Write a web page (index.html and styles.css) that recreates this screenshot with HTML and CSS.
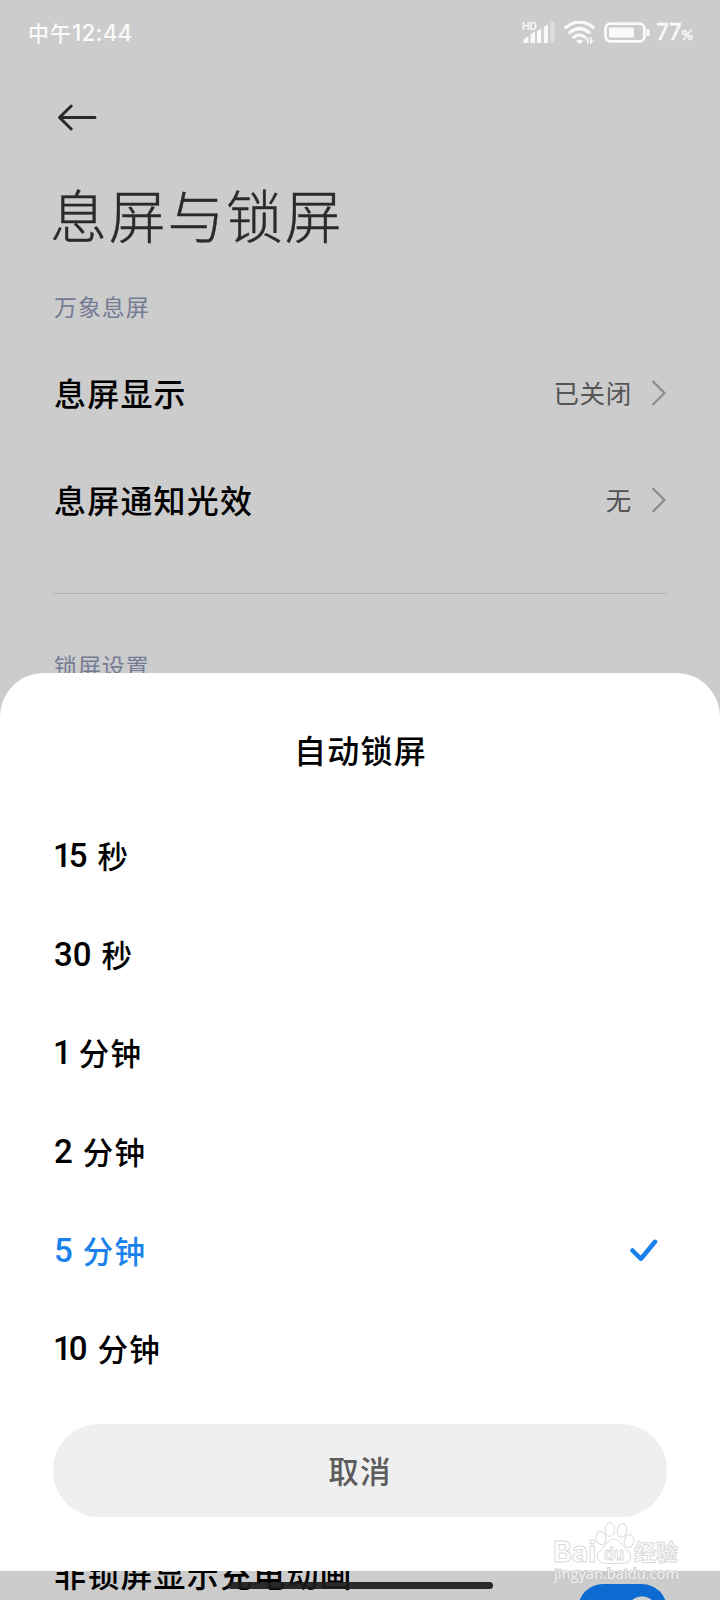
FILE: index.html
```html
<!DOCTYPE html>
<html lang="zh-CN">
<head>
  <meta charset="UTF-8" />
  <meta name="viewport" content="width=device-width, initial-scale=1.0" />
  <title>息屏与锁屏</title>
  <link rel="stylesheet" href="styles.css">
</head>
<body>
  <div class="screen">
    <header class="status-bar">
      <span class="clock">中午<b>12:44</b></span>
      <div class="status-icons">
        <svg class="signal" width="34" height="24" viewBox="0 0 34 24">
          <text class="hd" x="0" y="8.5" textLength="15" lengthAdjust="spacingAndGlyphs">HD</text>
          <path d="M1.5 22v-2.500q1-3 5-4V22zM8.500 22V14q1-2.500 4.500-3.500V22zM15 22V11q.6-2.500 4.200-3V22zM21.800 22V7.500q.4-3 4.200-4V22z" />
          <rect class="faint" x="28.500" y="1" width="4" height="21" rx="1" />
        </svg>
        <svg class="wifi" width="32" height="24" viewBox="0 0 32 24">
          <path class="arc" d="M1.800 6.500Q15.500-4.500 29.200 6.500M5.800 11.500Q15.500 3.500 25.200 11.500M9.800 16.300Q15.500 11.500 21 16.300" />
          <path d="M12 20q3.500-3 7 0l-3.500 3zM21 19.500l3.500-3.500V23h-1.500v-3.500zM26 16h1.500v3.500H30L26 23.500z" />
        </svg>
        <svg class="battery" width="46" height="22" viewBox="0 0 46 22">
          <rect class="shell" x="1.500" y="1.700" width="39" height="17.600" rx="5" />
          <rect x="5" y="5.500" width="25" height="10" rx="1.500" />
          <path d="M42.500 7q3.200 0 3.200 1.500v4q0 1.500-3.200 1.500z" />
        </svg>
        <span class="percent">77<small>%</small></span>
      </div>
    </header>

    <nav class="back">
      <svg width="40" height="28" viewBox="0 0 40 28">
        <path d="M14.200 3L2.500 14.500 14.200 26M3.500 14.500H38" />
      </svg>
    </nav>

    <h1>息屏与锁屏</h1>

    <section class="group">
      <h2>万象息屏</h2>
      <div class="row">
        <span class="name">息屏显示</span>
        <span class="value">已关闭</span>
        <svg class="chevron" width="16" height="28" viewBox="0 0 16 28"><path d="M1.500 2L13.500 14 1.500 26" /></svg>
      </div>
      <div class="row">
        <span class="name">息屏通知光效</span>
        <span class="value">无</span>
        <svg class="chevron" width="16" height="28" viewBox="0 0 16 28"><path d="M1.500 2L13.500 14 1.500 26" /></svg>
      </div>
    </section>

    <section class="group lock">
      <h2>锁屏设置</h2>
    </section>

    <div class="row last">
      <span class="name">非锁屏显示充电动画</span>
      <span class="switch"></span>
    </div>
  </div>

  <div class="sheet">
    <h3>自动锁屏</h3>
    <ul class="options">
      <li><span class="num"><i>1</i>5</span>秒</li>
      <li><span class="num">30</span>秒</li>
      <li><span class="num"><i>1</i></span>分钟</li>
      <li><span class="num">2</span>分钟</li>
      <li class="selected"><span class="num">5</span>分钟
        <svg class="check" width="28" height="23" viewBox="0 0 28 23"><path d="M2.500 11.500L11 19.800 25 2.800" /></svg>
      </li>
      <li><span class="num"><i>1</i>0</span>分钟</li>
    </ul>
    <button class="cancel">取消</button>
  </div>

  <div class="home-bar"></div>

  <!-- watermark -->
  <svg class="watermark" width="134" height="80" viewBox="0 0 134 80">
    <g class="outline">
      <text class="brand" x="1" y="48" textLength="43" lengthAdjust="spacingAndGlyphs">Bai</text>
      <ellipse cx="49" cy="24" rx="5" ry="6.800" transform="rotate(-12 49 24)" />
      <ellipse cx="58" cy="15.500" rx="4.800" ry="6.800" />
      <ellipse cx="70" cy="16.500" rx="4.800" ry="6.800" transform="rotate(10 70 16.500)" />
      <ellipse cx="77" cy="27" rx="4.800" ry="6.500" transform="rotate(15 77 27)" />
      <path d="M62 25c5 0 7 4 10 8 4 4 8 7 6.500 12-1.500 5-6 4.500-16.500 4.500S47 49 45.500 44C44 39 49 37 52 33c3-4 5-8 10-8z" />
      <text class="du" x="52" y="46" textLength="20" lengthAdjust="spacingAndGlyphs">du</text>
      <text class="cn" x="82" y="46" textLength="44" lengthAdjust="spacingAndGlyphs">经验</text>
    </g>
    <text class="url" x="2" y="65" textLength="125" lengthAdjust="spacingAndGlyphs">jingyan.baidu.com</text>
  </svg>
</body>
</html>
```
FILE: styles.css
```css
* {
  box-sizing: border-box;
  margin: 0;
  padding: 0;
}
body {
  position: relative;
  width: 720px;
  height: 1600px;
  overflow: hidden;
  background: #ccc;
  color: #000;
  font-family: Lato, "Noto Sans CJK SC", sans-serif;
}
.screen {
  height: 1600px;
  padding: 0 53px;
  overflow: hidden;
}

/* status bar */
.status-bar {
  display: flex;
  justify-content: space-between;
  align-items: center;
  height: 64px;
  margin: 0 -26px 0 -25px;
  color: #fafafa;
}
.clock {
  font-size: 21px;
  font-weight: 500;
  letter-spacing: 1px;
  white-space: nowrap;
}
.clock b {
  font-family: Inter, sans-serif;
  font-size: 22.500px;
  font-weight: 500;
  letter-spacing: 0.200px;
}
.status-icons {
  display: flex;
  align-items: center;
  padding-top: 2px;
}
.status-icons svg {
  fill: #fafafa;
}
.hd {
  font: 600 10.500px Inter, sans-serif;
}
.faint {
  opacity: 0.4;
}
.wifi {
  margin-left: 8px;
}
.wifi .arc {
  fill: none;
  stroke: #fafafa;
  stroke-width: 3.200;
  stroke-linecap: round;
}
.battery {
  margin-left: 8px;
}
.battery .shell {
  fill: none;
  stroke: #fafafa;
  stroke-width: 2.800;
}
.percent {
  margin-left: 6px;
  font-size: 22px;
  font-weight: 600;
  line-height: 30px;
  -webkit-text-stroke: 0.300px #fafafa;
}
.percent small {
  font-size: 14px;
  font-weight: 700;
}

.back {
  height: 28px;
  margin: 39px 0 0 4px;
}
.back svg {
  display: block;
  fill: none;
  stroke: #2a2a2a;
  stroke-width: 3;
  stroke-linecap: round;
  stroke-linejoin: round;
}
h1 {
  height: 80px;
  margin: 45px 0 0 -3px;
  color: #2a2a2a;
  font-size: 57px;
  font-weight: 300;
  letter-spacing: 1.700px;
  line-height: 80px;
  -webkit-text-stroke: 0.400px #2a2a2a;
}

/* settings rows */
.group {
  height: 303px;
  margin-top: 35px;
  border-bottom: 1px solid #b4b4b4;
}
.group h2 {
  padding-left: 1px;
  color: #757b94;
  font-size: 23px;
  font-weight: 400;
  letter-spacing: 0.900px;
  line-height: 32px;
}
.group h2 + .row {
  margin-top: 16px;
}
.group.lock {
  height: 87px;
  margin: 0;
  padding-top: 56px;
  border: none;
}
.row {
  display: flex;
  align-items: center;
  height: 107px;
}
.name {
  flex: 1;
  padding: 0 0 2px 1px;
  font-size: 32px;
  font-weight: 500;
  letter-spacing: 1.200px;
}
.value {
  padding-bottom: 2px;
  color: #555;
  font-size: 25.500px;
  letter-spacing: 0.700px;
}
.chevron {
  margin-left: 19px;
  fill: none;
  stroke: #8c8c8c;
  stroke-width: 2.200;
}
.row.last {
  margin-top: 839px;
}
.switch {
  align-self: flex-start;
  width: 89px;
  height: 50px;
  margin-top: 64px;
  border-radius: 25px;
  background: radial-gradient(circle at 64px 28px, #d0d0d0 15px, #0c6ad0 16px);
}

/* bottom sheet */
.sheet {
  position: absolute;
  top: 673px;
  left: 0;
  width: 720px;
  height: 898px;
  padding: 55px 53px 54px;
  border-radius: 44px 44px 0 0;
  background: #fff;
}
.sheet h3 {
  padding-left: 1px;
  font-size: 32px;
  font-weight: 500;
  letter-spacing: 1.200px;
  line-height: 46px;
  text-align: center;
}
.options {
  margin-top: 31px;
  list-style: none;
}
.options li {
  display: flex;
  align-items: center;
  height: 98.700px;
  padding: 1px 0 0 1px;
  font-size: 30.500px;
  font-weight: 500;
  letter-spacing: 1.200px;
}
.num {
  margin-right: 10px;
  padding-top: 1px;
  font-family: Roboto, sans-serif;
  font-size: 33px;
  letter-spacing: 0;
}
.num i {
  display: inline-block;
  margin: 0 -3px 0 -1px;
  font-style: normal;
}
.options .selected {
  color: #1a82ec;
}
.check {
  margin: 1px 9px 0 auto;
  fill: none;
  stroke: #1a82ec;
  stroke-width: 4.500;
  stroke-linecap: round;
  stroke-linejoin: round;
}
.cancel {
  display: block;
  width: 614px;
  height: 93px;
  margin-top: 27px;
  padding-bottom: 1px;
  border: none;
  border-radius: 46px;
  background: #efefef;
  color: #5c5c5c;
  font: 500 30.500px "Noto Sans CJK SC", sans-serif;
  letter-spacing: 1.200px;
}

.home-bar {
  position: absolute;
  left: 228px;
  top: 1582px;
  width: 265px;
  height: 7px;
  border-radius: 4px;
  background: rgba(28, 28, 28, 0.92);
}
.watermark {
  position: absolute;
  left: 552px;
  top: 1514px;
}
.outline {
  fill: rgba(255, 255, 255, 0.8);
  stroke: #dadada;
  stroke-width: 1;
}
.brand {
  font: 700 29px Inter, sans-serif;
}
.du {
  font: 700 18px "Liberation Sans", sans-serif;
}
.cn {
  font: 700 22px "Noto Sans CJK SC", sans-serif;
}
.url {
  fill: #f2f2f2;
  stroke: #c8c8c8;
  stroke-width: 1.500px;
  paint-order: stroke;
  font: 400 14.500px "Open Sans", sans-serif;
}
```
